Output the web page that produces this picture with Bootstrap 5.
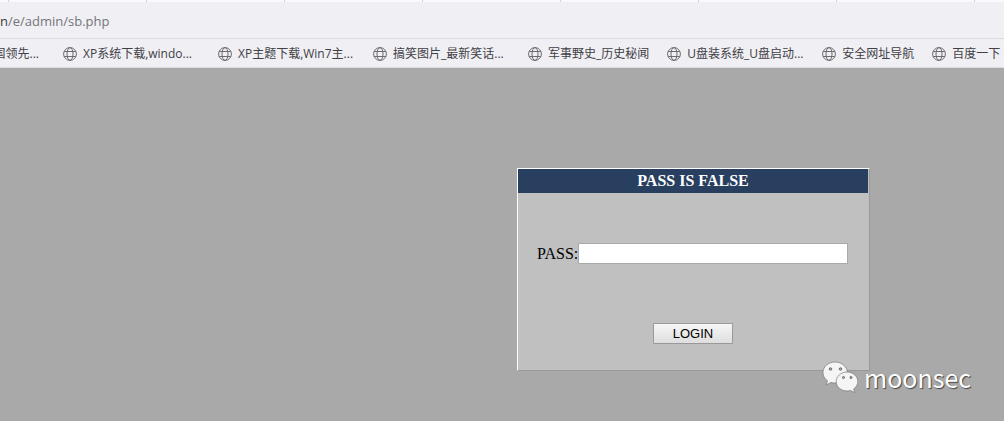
<!DOCTYPE html>
<html lang="zh-CN">
<head>
<meta charset="utf-8">
<meta name="viewport" content="width=device-width, initial-scale=1">
<title>sb.php</title>
<link href="https://cdn.jsdelivr.net/npm/bootstrap@5.3.0/dist/css/bootstrap.min.css" rel="stylesheet">
<style>
  body { background: #a9a9a9; font-family: "Open Sans", "Noto Sans CJK SC", sans-serif; }
  .tab-strip { height: 2px; background: #fafafc; padding-left: 8px; }
  .tab-strip span { flex: 0 0 138px; border-left: 1px solid #d2d2d8; }
  .browser-bar { background: #f0eff4; }
  .address-bar { height: 37px; padding-top: 3px; border-bottom: 1px solid #dcdbe0; font-size: 13px; color: #75757a; }
  .address-bar b { font-weight: 400; color: #3c3c41; }
  .bookmarks { height: 29px; padding-top: 1px; border-bottom: 1px solid #dcdbe0; font-size: 12px; }
  .bookmarks a { color: #414145; gap: 6px; margin-right: 18px; }
  .bookmarks .cut-link { width: 39px; margin-right: 24px; }
  .bookmarks svg { width: 14px; height: 14px; flex: none; }
  .bookmarks span { line-height: 18px; }
  .clipped { width: 117px; }
  .stage { padding: 100px 134px 50px 0; }
  .login-panel { width: 353px; background: #c0c0c0; border: 1px solid #fff; border-right-color: #999; border-bottom-color: #999; font-family: "Liberation Serif", serif; font-size: 16px; line-height: 21px; color: #000; }
  .login-panel h1 { margin: 0 1px 0 0; background: #293f5f; color: #fff; font-size: 16px; font-weight: 700; line-height: 24px; }
  .pass-row { padding: 50px 21px 0 19px; }
  .pass-row input { height: 21px; border: 1px solid #a9a9a9; background: #fff; font-size: 13px; min-width: 0; }
  .button-row { padding: 59px 1px 26px 0; }
  .login-btn { width: 80px; height: 21px; border: 1px solid #999; border-radius: 1px; background: linear-gradient(#f6f6f6, #dedede); font: 13px/19px "Liberation Sans", sans-serif; color: #000; }
  .brand-mark { left: 822px; top: 358px; gap: 6px; color: #fff; font-family: "Noto Sans CJK SC", sans-serif; font-size: 25px; line-height: 38px; text-shadow: 1px 1px 1px #444; }
</style>
</head>
<body class="position-relative">
<svg class="d-none" aria-hidden="true">
  <symbol id="globe" viewBox="0 0 14 14">
    <g fill="none" stroke="#6c6c70" stroke-width="1">
      <circle cx="7" cy="7" r="6.4"/><ellipse cx="7" cy="7" rx="3" ry="6.400"/><path d="M1.200 4.500h11.600M1.200 9.500h11.600"/>
    </g>
  </symbol>
</svg>
<header class="browser-bar">
  <div class="tab-strip d-flex overflow-hidden"><span></span><span></span><span></span><span></span><span></span><span></span><span></span><span></span></div>
  <div class="address-bar d-flex align-items-center"><b>n</b>/e/admin/sb.php</div>
  <nav class="bookmarks d-flex align-items-center overflow-hidden text-nowrap">
    <a class="cut-link d-flex align-items-center justify-content-end flex-shrink-0 text-decoration-none" href="#"><span>国领先...</span></a>
    <a class="d-flex align-items-center flex-shrink-0 text-decoration-none" href="#"><svg><use href="#globe"/></svg><span class="clipped">XP系统下载,windo...</span></a>
    <a class="d-flex align-items-center flex-shrink-0 text-decoration-none" href="#"><svg><use href="#globe"/></svg><span class="clipped">XP主题下载,Win7主...</span></a>
    <a class="d-flex align-items-center flex-shrink-0 text-decoration-none" href="#"><svg><use href="#globe"/></svg><span class="clipped">搞笑图片_最新笑话...</span></a>
    <a class="d-flex align-items-center flex-shrink-0 text-decoration-none" href="#"><svg><use href="#globe"/></svg><span>军事野史_历史秘闻</span></a>
    <a class="d-flex align-items-center flex-shrink-0 text-decoration-none" href="#"><svg><use href="#globe"/></svg><span class="clipped">U盘装系统_U盘启动...</span></a>
    <a class="d-flex align-items-center flex-shrink-0 text-decoration-none" href="#"><svg><use href="#globe"/></svg><span>安全网址导航</span></a>
    <a class="d-flex align-items-center flex-shrink-0 text-decoration-none" href="#"><svg><use href="#globe"/></svg><span>百度一下</span></a>
  </nav>
</header>
<main class="stage d-flex justify-content-end">
  <form class="login-panel">
    <h1 class="text-center">PASS IS FALSE</h1>
    <div class="pass-row d-flex align-items-center">
      <label for="pass">PASS:</label>
      <input class="flex-grow-1" id="pass" type="password">
    </div>
    <div class="button-row d-flex justify-content-center"><button class="login-btn p-0" type="button">LOGIN</button></div>
  </form>
</main>
<div class="brand-mark position-absolute d-flex align-items-center">
  <svg width="36" height="34" viewBox="0 0 36 34" aria-hidden="true">
    <g fill="#f5f5f5" stroke="#777" stroke-width=".7">
      <path d="M13 2C6.300 2 1 6.700 1 12.600c0 3.400 1.700 6.300 4.500 8.200L4 25l5-2.600c1.300.4 2.700.6 4 .6 6.700 0 12.400-4.600 12.400-10.400S19.700 2 13 2Z"/>
      <path d="M25 12c-6 0-10.800 4.300-10.800 9.600S19 31 25 31c1.300 0 2.500-.2 3.600-.5l4.200 2.200-1.200-3.700c2.600-1.700 4.200-4.400 4.200-7.400C35.800 16.300 31 12 25 12Z"/>
    </g>
    <g fill="#aaa" stroke="#555" stroke-width=".7"><circle cx="8.500" cy="9" r="1.300"/><circle cx="18.500" cy="9" r="1.300"/><circle cx="21.500" cy="17.500" r="1.100"/><circle cx="29" cy="17.500" r="1.100"/></g>
  </svg>
  <span>moonsec</span>
</div>
<script src="https://cdn.jsdelivr.net/npm/bootstrap@5.3.0/dist/js/bootstrap.bundle.min.js"></script>
</body>
</html>
